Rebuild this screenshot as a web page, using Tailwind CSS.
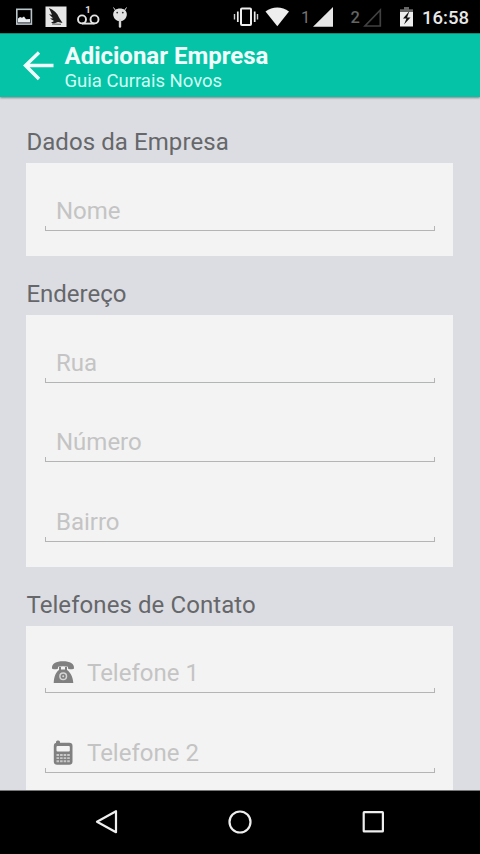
<!DOCTYPE html>
<html lang="pt-BR">
<head>
<meta charset="utf-8">
<title>Adicionar Empresa</title>
<script src="https://cdn.jsdelivr.net/npm/@tailwindcss/browser@4"></script>
</head>
<body class="bg-black">
<div class="flex h-[854px] w-[480px] flex-col overflow-hidden bg-[#dcdde2] font-[Roboto,sans-serif]">
  <!-- Status bar -->
  <div class="flex h-[33px] shrink-0 items-center bg-black text-[#e8e8e8]">
    <svg class="ml-[16px] h-[34px] w-[112px]" viewBox="16 0 112 34">
      <rect x="16.8" y="9.3" width="14.6" height="14.8" fill="none" stroke="#b9c4cb" stroke-width="1.6"/>
      <path d="M18 22.6v-4l2-1.5 2 .6 2-1.3 2 2.8 4-.3v3.7z" fill="#e8eef0"/>
      <rect x="45.5" y="6.5" width="21" height="20.5" fill="#e6e6e6"/>
      <path d="M49 8c5 2 8.500 5.500 10 9.500l3.500 5.500-4.500-1-4 1.500-3-.8 3-1.700-4-2.500 3-.3-4-4 3 .5z" fill="#1b1b1b"/>
      <path d="M52 24l9 .3" stroke="#555" stroke-width="1"/>
      <circle cx="82" cy="19.400" r="4" fill="none" stroke="#e2e2e2" stroke-width="1.9"/>
      <circle cx="94.500" cy="19.400" r="4" fill="none" stroke="#e2e2e2" stroke-width="1.9"/>
      <path d="M82 23.600h12.500" stroke="#e2e2e2" stroke-width="1.900"/>
      <text x="85.200" y="13.200" font-size="9.500" font-weight="bold" fill="#e2e2e2">1</text>
      <path d="M115.500 10.500l-2-3M124.500 10.500l2-3" stroke="#ddd" stroke-width="1"/>
      <path d="M113.200 14.500c0-4 3-6 6.800-6s6.800 2 6.800 6c0 3.500-3 6.700-6.800 6.700s-6.800-3.200-6.800-6.700z" fill="#e2e2e2"/>
      <path d="M120 20v6.500" stroke="#d5d5d5" stroke-width="2.400" stroke-linecap="round"/>
      <circle cx="117.200" cy="12.600" r=".9" fill="#333"/><circle cx="122.800" cy="12.600" r=".9" fill="#333"/>
    </svg>
    <svg class="ml-[104px] h-[34px] w-[58px]" viewBox="232 0 58 34" fill="none">
      <rect x="241" y="8.500" width="10" height="16.500" rx="1" stroke="#eee" stroke-width="2"/>
      <path d="M237.800 11.500v10.500M254.700 11.500v10.500" stroke="#eee" stroke-width="1.700"/>
      <path d="M234.500 14v5.500M257.500 14v5.500" stroke="#ccc" stroke-width="1.400"/>
      <path d="M265.500 11.500c7-5.500 16.500-5.500 23.500 0l-11.700 14.700z" fill="#eee"/>
    </svg>
    <span class="mt-[3px] ml-[11px] w-[12px] text-[16.500px] leading-[18px] text-[#757575]">1</span>
    <svg class="h-[34px] w-[22px]" viewBox="313 0 22 34"><path d="M313 26.800h20V7z" fill="#e6e6e6"/></svg>
    <span class="mt-[3px] ml-[15.500px] w-[11.500px] text-[16.500px] leading-[18px] font-medium text-[#646464]">2</span>
    <svg class="h-[34px] w-[20px]" viewBox="362 0 20 34"><path d="M365 26h15.300V10z" fill="none" stroke="#414141" stroke-width="1.700"/></svg>
    <svg class="ml-[17px] h-[34px] w-[16px]" viewBox="399 0 16 34">
      <path d="M404 7h5v2.200h4V14h-13V9.200h4z" fill="#666"/>
      <path d="M400 12h13V26.500h-13z" fill="#eee"/>
      <path d="M409.500 11l-6.500 7.500h3.500l-2.500 6 6.500-7h-3.500z" fill="#111"/>
    </svg>
    <span class="mt-[2px] ml-[7px] text-[18.500px] leading-[22px] font-medium">16:58</span>
  </div>

  <!-- App bar -->
  <header class="relative z-10 flex h-[64px] shrink-0 border-t border-[#108b76] bg-[#05c3a6] shadow-[0_1px_2px_rgba(0,0,0,0.4)]">
    <svg class="mt-[15px] ml-[22px] h-[34px] w-[34px] shrink-0" viewBox="0 0 34 34" fill="none" stroke="#f0fffb" stroke-width="3.400"><path d="M31.500 16.500H3.500M17 3.500L3.500 16.500l13.500 13.500"/></svg>
    <div class="ml-[8.500px] pt-[8px]">
      <h1 class="text-[24px] leading-[28px] font-bold whitespace-nowrap text-[#f0fffb]">Adicionar Empresa</h1>
      <p class="text-[18.500px] leading-[22px] whitespace-nowrap text-[#d0fff3]">Guia Currais Novos</p>
    </div>
  </header>

  <!-- Form -->
  <main class="flex-1 overflow-hidden pr-[27px] pl-[26.400px] text-[24px] leading-[28px] text-[#66676a]">
    <h2 class="mt-[31px] mb-[7.400px] tracking-[0.08px]">Dados da Empresa</h2>
    <section class="flex flex-col gap-[12px] bg-[#f3f3f3] pr-[18px] pl-[18.600px] pb-[25px]">
      <div class="flex h-[67.500px] flex-col justify-end text-[#c4c4c4]">
        <span class="px-[11px]">Nome</span>
        <div class="mt-[1px] h-[5px] border-x-[1.500px] border-b-[1.500px] border-[#b3b5b5]"></div>
      </div>
    </section>

    <h2 class="mt-[24px] mb-[7.500px]">Endereço</h2>
    <section class="flex flex-col gap-[12px] bg-[#f3f3f3] pr-[18px] pl-[18.600px] pb-[25px]">
      <div class="flex h-[67.400px] flex-col justify-end text-[#c4c4c4]">
        <span class="px-[11px]">Rua</span>
        <div class="mt-[1px] h-[5px] border-x-[1.500px] border-b-[1.500px] border-[#b3b5b5]"></div>
      </div>
      <div class="flex h-[67.400px] flex-col justify-end text-[#c4c4c4]">
        <span class="px-[11px]">Número</span>
        <div class="mt-[1px] h-[5px] border-x-[1.500px] border-b-[1.500px] border-[#b3b5b5]"></div>
      </div>
      <div class="flex h-[67.400px] flex-col justify-end text-[#c4c4c4]">
        <span class="px-[11px]">Bairro</span>
        <div class="mt-[1px] h-[5px] border-x-[1.500px] border-b-[1.500px] border-[#b3b5b5]"></div>
      </div>
    </section>

    <h2 class="mt-[24px] mb-[7.500px] tracking-[0.08px]">Telefones de Contato</h2>
    <section class="flex flex-col gap-[12px] bg-[#f3f3f3] pr-[18px] pl-[18.600px] pb-[25px]">
      <div class="flex h-[67.400px] flex-col justify-end text-[#c4c4c4]">
        <div class="flex items-center">
          <svg class="ml-[6px] -mt-[3px] h-[24px] w-[24px]" viewBox="0 0 24 24">
            <path d="M1 8.500C.6 3.500 5 1.200 12 1.200s11.400 2.300 11 7.300c0 1-6 1-6 0V6.700c-3-.7-7-.7-10 0v1.800c0 1-6 1-6 0z" fill="#808080"/>
            <path d="M8 7h2v2.500h4V7h2v3c3 2 6 6.500 6.300 13H2.700c.3-6.500 2.300-11 5.300-13z" fill="#808080"/>
            <circle cx="12.200" cy="16.200" r="3.300" fill="none" stroke="#d5d5d5" stroke-width="1.500"/>
            <circle cx="12.200" cy="16.200" r="1" fill="#d5d5d5"/>
          </svg>
          <span class="ml-[12px]">Telefone 1</span>
        </div>
        <div class="mt-[1px] h-[5px] border-x-[1.500px] border-b-[1.500px] border-[#b3b5b5]"></div>
      </div>
      <div class="flex h-[67.400px] flex-col justify-end text-[#c4c4c4]">
        <div class="flex items-center">
          <svg class="ml-[6px] h-[26px] w-[24px]" viewBox="0 0 24 26">
            <rect x="5" y=".5" width="4" height="5" rx="1.500" fill="#808080"/>
            <rect x="2.800" y="2.700" width="18.700" height="22" rx="3.200" fill="#808080"/>
            <rect x="5.500" y="6" width="13.300" height="5.600" rx="1" fill="#f3f3f3"/>
            <path d="M5.500 15h13.300M5.500 18.100h13.300M5.500 21.200h13.300" stroke="#c8c8c8" stroke-width="1.900" stroke-dasharray="2.600 .97"/>
          </svg>
          <span class="ml-[12px]">Telefone 2</span>
        </div>
        <div class="mt-[1px] h-[5px] border-x-[1.500px] border-b-[1.500px] border-[#b3b5b5]"></div>
      </div>
    </section>
  </main>

  <!-- Navigation bar -->
  <nav class="flex h-[64.500px] shrink-0 items-start border-t border-[#777] bg-black pt-[17px]">
    <svg class="ml-[94px] h-[28px] w-[26px]" viewBox="0 0 26 28"><path d="M22 3.200v21L3 13.700z" fill="none" stroke="#eee" stroke-width="2.200" stroke-linejoin="round"/></svg>
    <svg class="ml-[107px] h-[28px] w-[26px]" viewBox="0 0 26 28"><circle cx="13" cy="14" r="10.500" fill="none" stroke="#eee" stroke-width="2.200"/></svg>
    <svg class="ml-[107px] h-[28px] w-[26px]" viewBox="0 0 26 28"><rect x="3.700" y="4.200" width="19.200" height="19.200" rx=".5" fill="none" stroke="#eee" stroke-width="2.200"/></svg>
  </nav>
</div>
</body>
</html>
